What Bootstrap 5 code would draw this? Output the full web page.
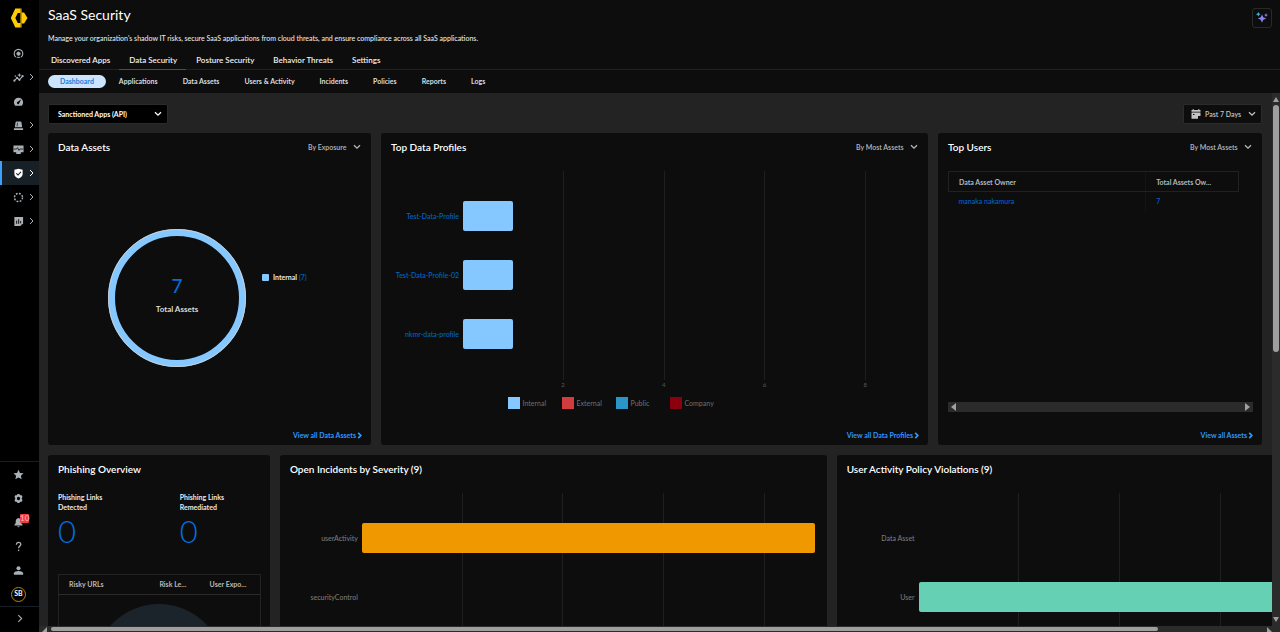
<!DOCTYPE html>
<html lang="en" data-bs-theme="dark">
<head>
<meta charset="utf-8">
<meta name="viewport" content="width=device-width, initial-scale=1">
<title>SaaS Security</title>
<link href="https://cdn.jsdelivr.net/npm/bootstrap@5.3.0/dist/css/bootstrap.min.css" rel="stylesheet">
<style>
  :root { --panel:#0d0d0d; --line:#232323; --link:#0064c8; --bright:#2f97ff; --sky:#85c8ff; }
  body { font-family:Lato, "Liberation Sans", sans-serif; font-size:8px; font-weight:500; line-height:10px; color:#e8e8e8; background:#232323; }
  a { color:var(--link); text-decoration:none; }
  h1 { font-size:14px; line-height:20px; }
  h2 { font-size:10px; line-height:14px; font-weight:600; }
  svg { display:block; flex:none; }
  .shrinkable { min-width:0; min-height:0; }
  /* sidebar */
  .side { width:39px; background:#000; flex:none; }
  .side-brand { height:41px; padding-right:2px; }
  .side-item { height:24px; padding-left:13px; gap:5px; color:#a9b0b6; border-left:0 solid #3da0ff; position:relative; }
  .side-item.active { background:#172027; color:#fff; border-left-width:2px; padding-left:11px; }
  .side-low { border-top:1px solid #172027; }
  .side-foot { border-top:1px solid #172027; height:26px; padding-bottom:3px; color:#a9b0b6; }
  .alert-count { position:absolute; left:20px; top:4px; background:#f23c41; color:#ffb3b3; font-size:8px; line-height:9px; border-radius:1px; }
  .avatar { width:15px; height:15px; border:1px solid #b58a00; border-radius:50%; color:#fff; font-size:7px; font-weight:700; margin-left:-2px; line-height:11px; }
  /* header */
  .top-bar { background:var(--panel); }
  .top-text { padding:5px 8px 0 9px; }
  .lede { font-size:7px; margin-top:8px; }
  .ai-btn { width:20px; height:20px; margin-top:3px; border:1px solid #292929; border-radius:3px; background:transparent; }
  .tabs-main { border-bottom:1px solid #202020; margin-top:9px; padding-left:2px; }
  .tabs-main a { color:#f2f2f2; font-weight:600; font-size:8px; line-height:12px; padding:2px 9px 3px 10px; border-bottom:1px solid transparent; margin-bottom:-1px; }
  .tabs-main a.active { border-color:#0d5ba8; }
  .tabs-sub { padding:5px 9px; height:23px; gap:1px; }
  .tabs-sub a { color:#dcdcdc; font-weight:700; font-size:7px; line-height:13px; padding:0 12px; border-radius:7px; }
  .tabs-sub a.active { background:#cbe5ff; color:#1a7bd6; }
  /* content */
  .work { padding:11px 10px 0 9px; overflow:hidden; min-width:0; }
  .pick { appearance:none; border:0; background:transparent; color:inherit; font-size:7px; font-weight:inherit; line-height:10px; padding:0; outline-offset:2px; }
  .app-drop { background:#000; border:1px solid #2b2b2b; border-radius:2px; width:120px; height:20px; padding:0 5px 0 9px; color:#fff; font-weight:700; }
  .date-drop { background:var(--panel); border:1px solid #2b2b2b; border-radius:2px; width:79px; height:20px; padding:0 5px 0 7px; gap:4px; color:#c4c4c4; font-weight:600; }
  .by-drop { color:#b8b8b8; gap:6px; font-weight:600; padding-right:1px; }
  .grid-a { display:grid; grid-template-columns:323fr 547fr 324fr; gap:10px; margin-top:9px; }
  .grid-b { display:grid; grid-template-columns:222fr 547fr 547fr; gap:10px; margin-top:10px; width:110%; }
  .tile { background:var(--panel); border-radius:3px; padding:7px 9px 5px 10px; min-width:0; min-height:312px; display:flex; flex-direction:column; }
  .more { color:var(--bright); font-weight:700; font-size:7px; gap:1px; }
  .more svg { stroke-width:2; }
  /* asset donut */
  .donut-row { margin-top:75px; padding-left:50px; gap:16px; align-items:flex-start; }
  .donut { width:138px; height:138px; border:7px solid var(--sky); outline:1px solid #c8cdd2; outline-offset:-1px; border-radius:50%; gap:8px; padding-bottom:7px; }
  .donut-label { font-weight:700; color:#dcdcdc; }
  .big-count { font-size:19px; line-height:20px; color:#0070e0; }
  .key { margin-top:43px; gap:4px; font-size:7px; }
  .key-dot { width:7px; height:7px; border-radius:1px; background:var(--sky); }
  /* bar charts */
  .chart { display:grid; grid-template-columns:68px 1fr; column-gap:4px; margin:17px 53px 0 0; }
  .names { padding-top:15px; text-align:right; color:#7a7a7a; font-size:7px; white-space:nowrap; }
  .names > * { height:59px; display:flex; align-items:center; justify-content:flex-end; }
  .plot { display:grid; }
  .plot > * { grid-area:1 / 1; min-width:0; }
  .rules { display:grid; grid-template-columns:repeat(4,1fr); }
  .rules span { border-right:1px solid #1f1f1f; }
  .bars { padding:15px 0 17px; }
  .bars > div { height:59px; display:flex; align-items:center; }
  .bars i { height:30px; border-radius:2px; flex:none; }
  .scale-x { grid-column:2; display:grid; grid-template-columns:repeat(4,1fr); font-size:6px; line-height:10px; color:#555; text-align:right; }
  .scale-x span { margin-right:-1px; }
  .legend-row { gap:15px; font-size:7px; color:#6a6a6a; margin-top:7px; padding-right:94px; }
  .legend-row > span { width:39px; gap:3px; }
  .legend-row i { width:12px; height:12px; flex:none; }
  /* tables */
  .owners { border-collapse:collapse; font-size:7px; width:291px; max-width:100%; margin-top:17px; }
  .owners th { border:1px solid #212121; border-width:1px 0; height:20px; padding:0 10px; font-weight:700; color:#b8b8b8; }
  .owners th:first-child { border-left-width:1px; width:68%; }
  .owners th:last-child { border-right-width:1px; }
  .owners th + th, .owners td + td { border-left:1px solid #151515; }
  .owners td { height:19px; padding:0 10px; }
  .tray { height:10px; background:#2b2b2b; padding:0 2px; color:#a0a0a0; margin-bottom:18px; }
  .links-row { margin-top:16px; font-size:7px; font-weight:700; }
  .links-row > div:first-child { width:60%; }
  .zero { font-size:31px; line-height:34px; margin-top:2px; font-weight:300; color:#0070e0; }
  .risk { border:1px solid #232323; margin-top:26px; }
  .risk table { font-size:7px; width:100%; table-layout:fixed; color:#b8b8b8; }
  .risk th { height:19px; padding:0 0 0 10px; font-weight:700; border-bottom:1px solid #2b2b2b; white-space:nowrap; }
  .risk th:nth-child(1) { width:45%; }
  .risk th:nth-child(2) { width:25%; }
  .blob { width:130px; height:130px; border-radius:50%; background:#1c242b; margin:9px auto; }
  /* scroll tracks */
  .track-y { width:8px; background:#2b2b2b; color:#9f9f9f; flex:none; }
  .track-y .thumb { width:6px; margin:3px 0 auto; }
  .track-x { height:6px; background:#2b2b2b; color:#9f9f9f; flex:none; padding:0 8px 0 3px; }
  .track-x .thumb { height:4px; }
  .thumb { background:#9f9f9f; border-radius:3px; }
</style>
</head>
<body class="d-flex vh-100 overflow-hidden">
<svg width="0" height="0" class="position-absolute">
  <defs>
    <symbol id="go" viewBox="0 0 5 8"><path d="M1 1l3 3-3 3" fill="none" stroke="currentColor"/></symbol>
    <symbol id="down" viewBox="0 0 8 6"><path d="M1 1.200l3 3 3-3" fill="none" stroke="currentColor" stroke-width="1.300"/></symbol>
  </defs>
</svg>
<nav class="side d-flex flex-column" aria-label="Products">
  <a href="#" class="side-brand d-flex justify-content-center pt-2" aria-label="Home">
    <svg width="18" height="20" viewBox="0 0 18 20"><path fill="#ffcb06" d="M5.300 .5H10.500V5H7.800L5.300 10l2.500 5h2.700v4.500H5.300L.8 10z"/><path fill="#ffcb06" d="M10.500 .5h1V19.500h-1z"/><path fill="#ffcb06" d="M11.500 4.500h2.600L17.500 10l-3.400 5.500h-2.600z"/></svg>
  </a>
  <a href="#" class="side-item d-flex align-items-center" aria-label="Command center"><svg width="11" height="11" viewBox="0 0 12 12" fill="none" stroke="currentColor"><path d="M3 9.800a4.700 4.700 0 1 1 6 0" stroke-width="1.200"/><circle cx="6" cy="6.200" r="1.800" fill="currentColor"/><path d="M4 10.200h4" stroke-width="1"/></svg></a>
  <a href="#" class="side-item d-flex align-items-center" aria-label="Insights"><svg width="11" height="11" viewBox="0 0 12 12" fill="currentColor"><path d="M1.500 9.500L4.500 6.500 7 8.500l3.500-4" fill="none" stroke="currentColor" stroke-width="1.200"/><circle cx="1.500" cy="9.500" r="1.200"/><circle cx="4.500" cy="6.500" r="1.200"/><circle cx="7" cy="8.500" r="1.200"/><circle cx="10.500" cy="4.500" r="1.200"/><path d="M7 1l.7 1.600 1.600.7-1.600.7L7 5.600l-.7-1.600-1.600-.7 1.600-.7zM2.500 3l.4 1 1 .4-1 .4-.4 1-.4-1-1-.4 1-.4z"/></svg><svg width="5" height="8"><use href="#go"/></svg></a>
  <a href="#" class="side-item d-flex align-items-center" aria-label="Dashboards"><svg width="11" height="11" viewBox="0 0 12 12"><path fill="currentColor" fill-rule="evenodd" d="M2.500 10.500A5 5 0 1 1 9.500 10.500zM9 3.500L5.300 6.400a1.200 1.200 0 1 0 1.500 1.500z"/></svg></a>
  <a href="#" class="side-item d-flex align-items-center" aria-label="Incidents"><svg width="11" height="11" viewBox="0 0 12 12"><path fill="currentColor" d="M4 1.500h4Q9 1.500 9.200 2.500L10 8H2l.8-5.500Q3 1.500 4 1.500zM1 9h10v2H1z"/><path d="M5 3l-.6 4" stroke="#000" stroke-width=".7"/></svg><svg width="5" height="8"><use href="#go"/></svg></a>
  <a href="#" class="side-item d-flex align-items-center" aria-label="Monitoring"><svg width="11" height="11" viewBox="0 0 12 12"><path fill="currentColor" d="M.5 1.500h11v7.500H8.500v2h-5V9H.5z"/><path d="M1 5.500h3l1-1.500 1.500 3 1-1.500H11" fill="none" stroke="#000" stroke-width=".8"/></svg><svg width="5" height="8"><use href="#go"/></svg></a>
  <a href="#" class="side-item active d-flex align-items-center" aria-label="Security"><svg width="11" height="11" viewBox="0 0 12 12"><path fill="currentColor" d="M1.500 2L6 .8 10.500 2v4.500C10.500 9 8.500 10.500 6 11.500 3.500 10.500 1.500 9 1.500 6.500z"/><path d="M3.600 5.800l1.900 1.900 3.100-3.400" fill="none" stroke="#172027" stroke-width="1.200"/></svg><svg width="5" height="8"><use href="#go"/></svg></a>
  <a href="#" class="side-item d-flex align-items-center" aria-label="Workflows"><svg width="11" height="11" viewBox="0 0 12 12" fill="none" stroke="currentColor"><circle cx="6" cy="6" r="4.400" stroke-width="1.600" stroke-dasharray="2 1.455"/></svg><svg width="5" height="8"><use href="#go"/></svg></a>
  <a href="#" class="side-item d-flex align-items-center" aria-label="Reports"><svg width="11" height="11" viewBox="0 0 12 12"><path fill="currentColor" d="M1.500 1h9.500v7l-3 3H1.500z"/><path d="M4 5v3.500M6.200 3.500v5M8.400 5.500V8" stroke="#000"/></svg><svg width="5" height="8"><use href="#go"/></svg></a>
  <div class="side-low mt-auto">
    <a href="#" class="side-item d-flex align-items-center" aria-label="Favorites"><svg width="11" height="11" viewBox="0 0 12 12"><path fill="currentColor" d="M6 .8l1.600 3.500 3.900.4-2.900 2.600.8 3.800L6 9.200l-3.400 1.900.8-3.800L.5 4.700l3.900-.4z"/></svg></a>
    <a href="#" class="side-item d-flex align-items-center" aria-label="Settings"><svg width="11" height="11" viewBox="0 0 12 12"><path fill="currentColor" fill-rule="evenodd" d="M4.800 1h2.400l.4 1.500 1.500-.4 1.300 2.100L9.400 6l1 1.800-1.300 2.100-1.500-.4L7.200 11H4.800l-.4-1.500-1.500.4-1.300-2.100 1-1.800-1-1.800 1.300-2.100 1.500.4zM6 4.200a1.800 1.800 0 1 0 0 3.600 1.800 1.800 0 0 0 0-3.600z"/></svg></a>
    <a href="#" class="side-item d-flex align-items-center" aria-label="Notifications"><svg width="11" height="11" viewBox="0 0 12 12"><path fill="currentColor" d="M6 1c2.200.4 3 2 3 3.800 0 2.200.6 3 1.500 3.700v.8h-9v-.8C2.400 7.800 3 7 3 4.800 3 3 3.800 1.400 6 1zM4.800 10h2.400a1.200 1.200 0 0 1-2.400 0z"/></svg><span class="alert-count">10</span></a>
    <a href="#" class="side-item d-flex align-items-center" aria-label="Help"><svg width="11" height="11" viewBox="0 0 12 12" fill="none" stroke="currentColor" stroke-width="1.400"><path d="M3.700 4C3.700 2.500 4.700 1.500 6.100 1.500S8.500 2.400 8.500 3.700C8.500 5.500 6.100 5.500 6.100 8"/><path d="M6.100 9.400v1.600"/></svg></a>
    <a href="#" class="side-item d-flex align-items-center" aria-label="Account"><svg width="11" height="11" viewBox="0 0 12 12" fill="currentColor"><circle cx="6" cy="3.500" r="2.200"/><path d="M1 10.500V9c0-1.700 3-2.500 5-2.500s5 .8 5 2.500v1.500z"/></svg></a>
    <a href="#" class="side-item d-flex align-items-center"><span class="avatar text-center">SB</span></a>
  </div>
  <a href="#" class="side-foot d-flex align-items-center justify-content-center" aria-label="Expand"><svg width="6" height="9"><use href="#go"/></svg></a>
</nav>

<div class="d-flex flex-column flex-grow-1 shrinkable">
  <header class="top-bar flex-shrink-0">
    <div class="top-text d-flex justify-content-between">
      <div>
        <h1 class="fw-normal mb-0">SaaS Security</h1>
        <p class="lede mb-0">Manage your organization's shadow IT risks, secure SaaS applications from cloud threats, and ensure compliance across all SaaS applications.</p>
      </div>
      <button class="ai-btn p-0 d-flex justify-content-center align-items-center" type="button" aria-label="Assistant"><svg width="12" height="12" viewBox="0 0 12 12"><path fill="#8a84f0" d="M6 2.500l1.300 2.700L10.200 6.500 7.300 7.800 6 10.700 4.700 7.800 1.800 6.500l2.900-1.300z"/><path fill="#35b5d8" d="M2.300 0l.8 1.500 1.500.8-1.500.8-.8 1.500-.8-1.500L0 2.300l1.500-.8z"/><path fill="#8a84f0" d="M10 1.300l.6 1.200 1.200.6-1.200.6-.6 1.200-.6-1.200-1.200-.6 1.200-.6z"/></svg></button>
    </div>
    <nav class="tabs-main d-flex" aria-label="Sections">
      <a href="#">Discovered Apps</a><a href="#" class="active">Data Security</a><a href="#">Posture Security</a><a href="#">Behavior Threats</a><a href="#">Settings</a>
    </nav>
    <nav class="tabs-sub d-flex" aria-label="Data security pages">
      <a href="#" class="active">Dashboard</a><a href="#">Applications</a><a href="#">Data Assets</a><a href="#">Users &amp; Activity</a><a href="#">Incidents</a><a href="#">Policies</a><a href="#">Reports</a><a href="#">Logs</a>
    </nav>
  </header>

  <div class="d-flex flex-grow-1 shrinkable">
    <main class="work flex-grow-1">
      <div class="d-flex justify-content-between">
        <label class="app-drop d-flex align-items-center justify-content-between"><select class="pick" aria-label="Application type"><option>Sanctioned Apps (API)</option></select><svg width="8" height="6"><use href="#down"/></svg></label>
        <label class="date-drop d-flex align-items-center"><svg width="10" height="10" viewBox="0 0 10 10"><path fill="currentColor" d="M.5 1h1.200V0h1v1h4.600V0h1v1h1.200v1.800H.5zM.5 3.600h9V7H7v2.800H.5z"/><path d="M2 5.500h1.500" stroke="#111"/></svg><select class="pick flex-grow-1" aria-label="Period"><option>Past 7 Days</option></select><svg width="8" height="6"><use href="#down"/></svg></label>
      </div>

      <div class="grid-a">
        <section class="tile">
          <div class="d-flex justify-content-between align-items-center"><h2 class="mb-0">Data Assets</h2><label class="by-drop d-flex align-items-center"><select class="pick" aria-label="Group assets"><option>By Exposure</option></select><svg width="8" height="6"><use href="#down"/></svg></label></div>
          <div class="donut-row d-flex">
            <div class="donut d-flex flex-column align-items-center justify-content-center"><a href="#" class="big-count">7</a><span class="donut-label">Total Assets</span></div>
            <div class="key d-flex align-items-center"><span class="key-dot"></span><span><b>Internal</b> <a href="#">(7)</a></span></div>
          </div>
          <a href="#" class="more mt-auto align-self-end d-flex align-items-center">View all Data Assets <svg width="5" height="7"><use href="#go"/></svg></a>
        </section>

        <section class="tile">
          <div class="d-flex justify-content-between align-items-center"><h2 class="mb-0">Top Data Profiles</h2><label class="by-drop d-flex align-items-center"><select class="pick" aria-label="Sort profiles"><option>By Most Assets</option></select><svg width="8" height="6"><use href="#down"/></svg></label></div>
          <div class="chart">
            <div class="names"><a href="#">Test-Data-Profile</a><a href="#">Test-Data-Profile-02</a><a href="#">nkmr-data-profile</a></div>
            <div class="plot">
              <div class="rules"><span></span><span></span><span></span><span></span></div>
              <div class="bars"><div><i style="width:12.5%;background:#85c8ff"></i></div><div><i style="width:12.5%;background:#85c8ff"></i></div><div><i style="width:12.5%;background:#85c8ff"></i></div></div>
            </div>
            <div class="scale-x"><span>2</span><span>4</span><span>6</span><span>8</span></div>
          </div>
          <div class="legend-row d-flex justify-content-center">
            <span class="d-flex align-items-center"><i style="background:#85c8ff"></i>Internal</span><span class="d-flex align-items-center"><i style="background:#d13c3f"></i>External</span><span class="d-flex align-items-center"><i style="background:#2b95c8"></i>Public</span><span class="d-flex align-items-center"><i style="background:#8b000d"></i>Company</span>
          </div>
          <a href="#" class="more mt-auto align-self-end d-flex align-items-center">View all Data Profiles <svg width="5" height="7"><use href="#go"/></svg></a>
        </section>

        <section class="tile">
          <div class="d-flex justify-content-between align-items-center"><h2 class="mb-0">Top Users</h2><label class="by-drop d-flex align-items-center"><select class="pick" aria-label="Sort users"><option>By Most Assets</option></select><svg width="8" height="6"><use href="#down"/></svg></label></div>
          <table class="owners">
            <thead><tr><th>Data Asset Owner</th><th>Total Assets Ow...</th></tr></thead>
            <tbody><tr><td><a href="#">manaka nakamura</a></td><td><a href="#">7</a></td></tr></tbody>
          </table>
          <div class="tray mt-auto d-flex justify-content-between align-items-center"><svg width="6" height="8" viewBox="0 0 6 8"><path fill="currentColor" d="M6 0v8L1 4z"/></svg><svg width="6" height="8" viewBox="0 0 6 8"><path fill="currentColor" d="M0 0v8l5-4z"/></svg></div>
          <a href="#" class="more align-self-end d-flex align-items-center">View all Assets <svg width="5" height="7"><use href="#go"/></svg></a>
        </section>
      </div>

      <div class="grid-b">
        <section class="tile">
          <h2 class="mb-0">Phishing Overview</h2>
          <div class="links-row d-flex"><div>Phishing Links<br>Detected<div class="zero">0</div></div><div>Phishing Links<br>Remediated<div class="zero">0</div></div></div>
          <div class="risk"><table><thead><tr><th>Risky URLs</th><th>Risk Le...</th><th>User Expo...</th></tr></thead></table><div class="blob"></div></div>
        </section>
        <section class="tile">
          <h2 class="mb-0">Open Incidents by Severity (9)</h2>
          <div class="chart">
            <div class="names"><span>userActivity</span><span>securityControl</span></div>
            <div class="plot">
              <div class="rules"><span></span><span></span><span></span><span></span></div>
              <div class="bars"><div><i style="width:112.5%;background:#f09800"></i></div><div></div></div>
            </div>
          </div>
        </section>
        <section class="tile">
          <h2 class="mb-0">User Activity Policy Violations (9)</h2>
          <div class="chart">
            <div class="names"><span>Data Asset</span><span>User</span></div>
            <div class="plot">
              <div class="rules"><span></span><span></span><span></span><span></span></div>
              <div class="bars"><div></div><div><i style="width:112.5%;background:#66d0b5"></i></div></div>
            </div>
          </div>
        </section>
      </div>
    </main>
    <div class="track-y d-flex flex-column align-items-center justify-content-between py-1">
      <svg width="6" height="5" viewBox="0 0 6 5"><path fill="currentColor" d="M3 0l3 5H0z"/></svg>
      <div class="thumb" style="height:47%"></div>
      <svg width="6" height="5" viewBox="0 0 6 5"><path fill="currentColor" d="M3 5l3-5H0z"/></svg>
    </div>
  </div>
  <div class="track-x d-flex align-items-center"><svg width="5" height="5" viewBox="0 0 5 5"><path fill="currentColor" d="M5 0v5H0z"/></svg><div class="thumb ms-1" style="width:90%"></div><svg class="ms-auto" width="5" height="5" viewBox="0 0 5 5"><path fill="currentColor" d="M0 0v5h5z"/></svg></div>
</div>
<script src="https://cdn.jsdelivr.net/npm/bootstrap@5.3.0/dist/js/bootstrap.bundle.min.js"></script>
</body>
</html>
